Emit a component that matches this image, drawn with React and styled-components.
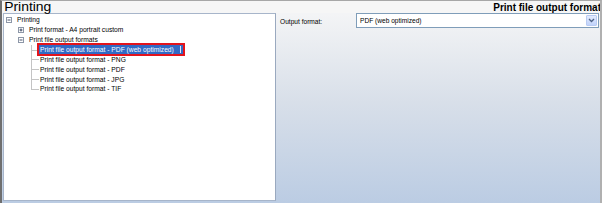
import React from "react";
import styled, { createGlobalStyle } from "styled-components";

const GlobalStyle = createGlobalStyle`
  html, body { margin: 0; padding: 0; background: #ffffff; }
  body { font-family: "Liberation Sans", Arial, sans-serif; }
`;

const nodes = [
  { label: "Printing", level: 0, expander: "minus" },
  { label: "Print format - A4 portrait custom", level: 1, expander: "plus" },
  { label: "Print file output formats", level: 1, expander: "minus" },
  { label: "Print file output format - PDF (web optimized)", level: 2, selected: true },
  { label: "Print file output format - PNG", level: 2 },
  { label: "Print file output format - PDF", level: 2 },
  { label: "Print file output format - JPG", level: 2 },
  { label: "Print file output format - TIF", level: 2, last: true },
];

function Expander({ type }) {
  return (
    <ExpanderBox width="6" height="6" viewBox="0 0 6 6">
      <rect x="0.5" y="0.5" width="5" height="5" fill="#fff" stroke="#8d97a8" />
      <line x1="1.5" y1="3" x2="4.5" y2="3" stroke="#1c2a4a" strokeWidth="0.8" />
      {type === "plus" && (
        <line x1="3" y1="1.5" x2="3" y2="4.5" stroke="#1c2a4a" strokeWidth="0.8" />
      )}
    </ExpanderBox>
  );
}

export default function App() {
  return (
    <>
      <GlobalStyle />
      <Window>
        <Header>
          <Title>Printing</Title>
          <SectionTitle>Print file output format</SectionTitle>
        </Header>
        <Body>
          <TreePanel>
            {nodes.map((n) => (
              <TreeRow key={n.label} level={n.level} last={n.last}>
                {n.expander && <Expander type={n.expander} />}
                <NodeLabel selected={n.selected}>{n.label}</NodeLabel>
              </TreeRow>
            ))}
          </TreePanel>
          <Settings>
            <FieldRow>
              <FieldLabel>Output format:</FieldLabel>
              <Combo>
                <ComboText>PDF (web optimized)</ComboText>
                <ComboButton>
                  <svg width="7" height="5" viewBox="0 0 7 5">
                    <path d="M1 1 L3.5 3.5 L6 1" fill="none" stroke="#4d6185" strokeWidth="1.3" />
                  </svg>
                </ComboButton>
              </Combo>
            </FieldRow>
          </Settings>
        </Body>
      </Window>
    </>
  );
}

const Window = styled.div`
  width: 602px;
  height: 203px;
  box-sizing: border-box;
  border-top: 1px solid #a7a7a7;
  border-left: 2px solid #6f6f6f;
  border-right: 2px solid #b0b0b0;
  background: linear-gradient(to bottom, #f7f7f8 0%, #eef0f3 15%, #d8dfe9 50%, #bbcce3 100%);
  display: flex;
  flex-direction: column;
  overflow: hidden;
`;

const Header = styled.div`
  height: 12px;
  display: flex;
  justify-content: space-between;
  align-items: flex-end;
  background: #f6f6f6;
`;

const Title = styled.span`
  font-size: 13px;
  line-height: 12px;
  color: #000;
  padding-left: 2px;
  transform: scaleX(1.07);
  transform-origin: left;
`;

const SectionTitle = styled.span`
  font-size: 10px;
  font-weight: bold;
  line-height: 10px;
  color: #000;
  white-space: nowrap;
  margin-right: -1px;
`;

const Body = styled.div`
  flex: 1;
  display: flex;
  padding: 0 0 2px 1px;
`;

const TreePanel = styled.div`
  width: 273px;
  box-sizing: border-box;
  background: #ffffff;
  border: 1px solid #a7b5ca;
  border-right-color: #9aa9bf;
  padding-top: 1px;
  font-size: 6.7px;
  color: #000;
`;

const TreeRow = styled.div`
  position: relative;
  height: 9.86px;
  display: flex;
  align-items: center;
  gap: 4px;
  white-space: nowrap;
  padding-left: ${(p) => (p.level === 0 ? 2 : p.level === 1 ? 14 : 35)}px;

  ${(p) =>
    p.level === 2 &&
    `
    &::before {
      content: "";
      position: absolute;
      left: 27px;
      top: 0;
      height: ${p.last ? "50%" : "100%"};
      border-left: 1px solid #c4c4c4;
    }
    &::after {
      content: "";
      position: absolute;
      left: 27px;
      top: 50%;
      width: 8px;
      border-top: 1px solid #c4c4c4;
    }
  `}
`;

const ExpanderBox = styled.svg`
  flex: none;
  display: block;
`;

const NodeLabel = styled.span`
  position: relative;
  z-index: 1;
  line-height: 9px;
  padding: 0 ${(p) => (p.selected ? "9px" : "1px")} 0 1px;
  ${(p) =>
    p.selected &&
    `
    background: #316ac5;
    color: #ffffff;
    outline: 2px solid #e3141c;
    &::after {
      content: "";
      position: absolute;
      right: 2px;
      top: 1px;
      bottom: 1px;
      width: 1px;
      background: #dfe6f4;
    }
  `}
`;

const Settings = styled.div`
  flex: 1;
  padding-left: 4px;
`;

const FieldRow = styled.div`
  display: flex;
  align-items: center;
  height: 15px;
`;

const FieldLabel = styled.span`
  width: 76px;
  font-size: 6.6px;
  color: #000;
  padding-top: 1px;
`;

const Combo = styled.div`
  flex: 1;
  height: 15px;
  box-sizing: border-box;
  margin-right: 1px;
  border: 1px solid #7f9db9;
  background: #ffffff;
  display: flex;
  align-items: center;
  padding: 0 1px 0 3px;
`;

const ComboText = styled.span`
  flex: 1;
  font-size: 6.6px;
  color: #000;
`;

const ComboButton = styled.div`
  width: 11px;
  height: 11px;
  box-sizing: border-box;
  border: 1px solid #b9cbf3;
  border-radius: 1px;
  background: linear-gradient(to bottom, #e3ebfd, #c1d3fb);
  display: flex;
  align-items: center;
  justify-content: center;
`;
